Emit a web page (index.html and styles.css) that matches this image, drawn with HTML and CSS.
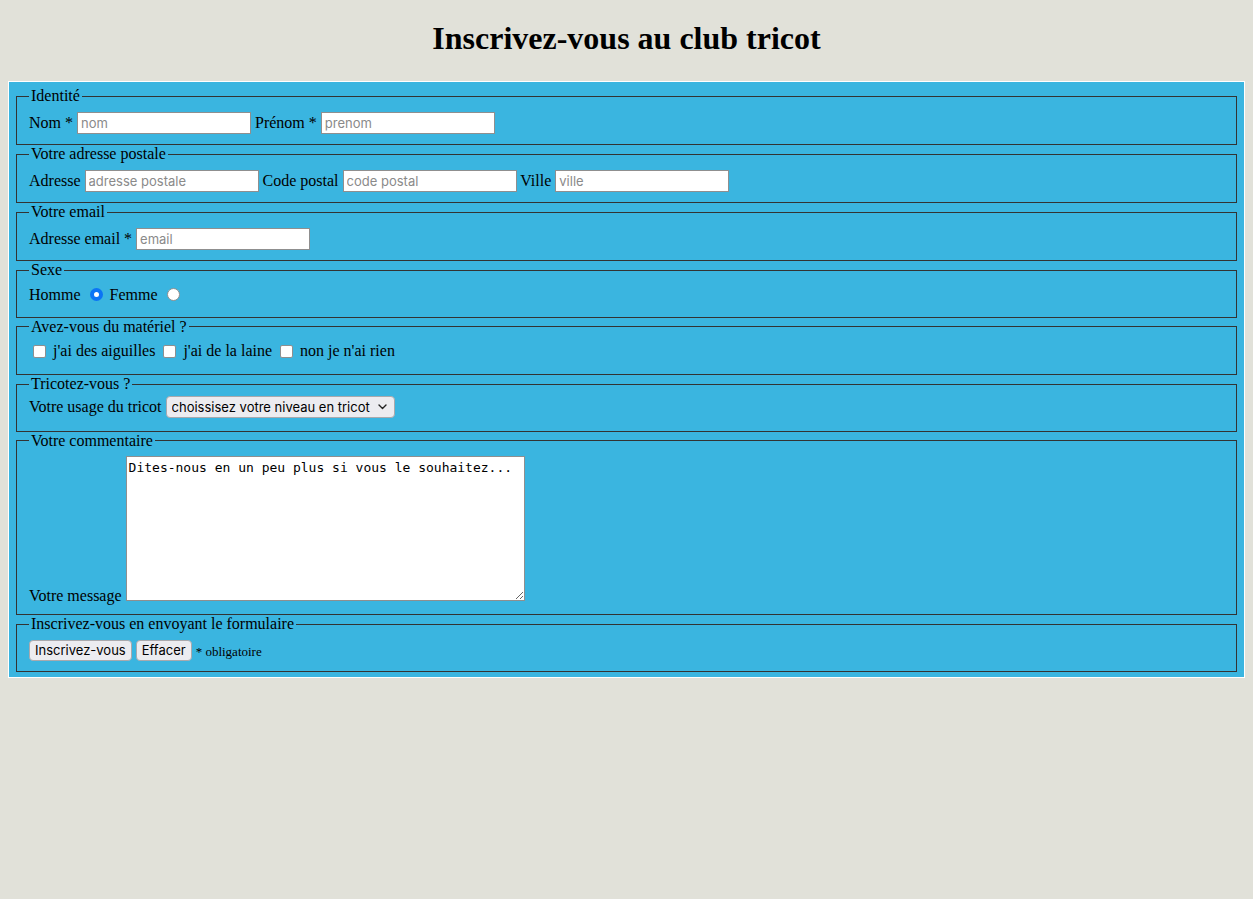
FILE: index.html
```html
<!DOCTYPE html>
<html lang="fr">
<head>
<meta charset="utf-8">
<title>Club tricot</title>
<link rel="stylesheet" href="styles.css">
</head>
<body>
<h1 class="title">Inscrivez-vous au club tricot</h1>
<form class="form">
  <fieldset class="group group-text">
    <legend>Identité</legend>
    <label>Nom *</label> <input class="field" type="text" placeholder="nom"> <label>Prénom *</label> <input class="field" type="text" placeholder="prenom">
  </fieldset>
  <fieldset class="group group-text">
    <legend>Votre adresse postale</legend>
    <label>Adresse</label> <input class="field" type="text" placeholder="adresse postale"> <label>Code postal</label> <input class="field" type="text" placeholder="code postal"> <label>Ville</label> <input class="field" type="text" placeholder="ville">
  </fieldset>
  <fieldset class="group group-text">
    <legend>Votre email</legend>
    <label>Adresse email *</label> <input class="field" type="email" placeholder="email">
  </fieldset>
  <fieldset class="group group-radio">
    <legend>Sexe</legend>
    <label>Homme</label> <input class="radio" type="radio" name="sexe" checked> <label>Femme</label> <input class="radio" type="radio" name="sexe">
  </fieldset>
  <fieldset class="group group-check">
    <legend>Avez-vous du matériel ?</legend>
    <input class="check" type="checkbox"> <label>j'ai des aiguilles</label> <input class="check" type="checkbox"> <label>j'ai de la laine</label> <input class="check" type="checkbox"> <label>non je n'ai rien</label>
  </fieldset>
  <fieldset class="group group-select">
    <legend>Tricotez-vous ?</legend>
    <label>Votre usage du tricot</label> <span class="select-wrap"><select class="select"><option>choissisez votre niveau en tricot</option></select><svg class="chev" width="9" height="6" viewBox="0 0 9 6"><path d="M1 1l3.5 3.5L8 1" fill="none" stroke="#222" stroke-width="1.4" stroke-linecap="round" stroke-linejoin="round"/></svg></span>
  </fieldset>
  <fieldset class="group group-area">
    <legend>Votre commentaire</legend>
    <label>Votre message</label> <textarea class="message">Dites-nous en un peu plus si vous le souhaitez...</textarea>
  </fieldset>
  <fieldset class="group group-actions">
    <legend>Inscrivez-vous en envoyant le formulaire</legend>
    <button class="btn" type="button">Inscrivez-vous</button> <button class="btn" type="button">Effacer</button> <small class="note">* obligatoire</small>
  </fieldset>
</form>
</body>
</html>
```
FILE: styles.css
```css
html {
  background: #e1e1d9;
}
body {
  margin: 0 8px;
  font-family: "Liberation Serif", "Times New Roman", serif;
  font-size: 16px;
  color: #000;
}
.title {
  margin: 20px 0 24px;
  font-size: 32px;
  line-height: 37px;
  font-weight: bold;
  text-align: center;
}
.form {
  background: #3ab5e0;
  border: 1px solid #ffffff;
  padding: 5px;
  margin: 0;
}
.group {
  margin: 0 2px;
  padding: 5.6px 12px 10px;
  border: 1px solid #333333;
  min-width: 0;
}
.group legend {
  padding: 0 2px;
  line-height: 18px;
}
.group-text {
  padding-top: 7px;
  padding-bottom: 10px;
}
.group-radio {
  padding-bottom: 13px;
}
.group-check {
  padding-top: 6.6px;
  padding-bottom: 14px;
}
.group-select {
  padding-top: 2.6px;
  padding-bottom: 13px;
}
.group-area {
  padding-bottom: 9px;
}
.group-actions {
  padding-top: 6.6px;
  padding-bottom: 10px;
}
.field {
  box-sizing: border-box;
  width: 174px;
  height: 22px;
  margin: 0;
  padding: 1px 3px;
  border: 1px solid #8f8f8f;
  background: #ffffff;
  font-family: Inter, "Liberation Sans", Arial, sans-serif;
  font-size: 13px;
  color: #000;
}
.field::placeholder {
  color: #8a8a8a;
}
.radio {
  appearance: none;
  -webkit-appearance: none;
  box-sizing: border-box;
  width: 13px;
  height: 13px;
  margin: 3px 3px 0 5px;
  border: 1px solid #8f8f8f;
  border-radius: 50%;
  background: #ffffff;
  vertical-align: -1px;
}
.radio:checked {
  border: 4px solid #0b74f5;
  background: #ffffff;
}
.check {
  appearance: none;
  -webkit-appearance: none;
  box-sizing: border-box;
  width: 13px;
  height: 13px;
  margin: 3px 3px 0 4px;
  border: 1px solid #8f8f8f;
  border-radius: 2px;
  background: #ffffff;
  vertical-align: -2px;
}
.select-wrap {
  position: relative;
  display: inline-block;
}
.select {
  appearance: none;
  -webkit-appearance: none;
  box-sizing: border-box;
  width: 229px;
  height: 22px;
  margin: 0;
  padding: 0 20px 0 5px;
  border: 1px solid #a9a9ad;
  border-radius: 4px;
  background: #ececf0;
  font-family: Inter, "Liberation Sans", Arial, sans-serif;
  font-size: 13px;
  color: #000;
}
.chev {
  position: absolute;
  right: 8px;
  top: 8px;
  pointer-events: none;
}
.message {
  box-sizing: border-box;
  width: 399px;
  height: 145px;
  margin: 1px 0 0;
  padding: 3px 2px 2px;
  border: 1px solid #8f8f8f;
  background: #ffffff;
  font-family: "DejaVu Sans Mono", Menlo, monospace;
  font-size: 13px;
  line-height: 16px;
  color: #000;
  resize: both;
  vertical-align: baseline;
}
.btn {
  box-sizing: border-box;
  height: 21px;
  margin: 0;
  padding: 0 5px;
  border: 1px solid #a9a9ad;
  border-radius: 4px;
  background: #ececf0;
  font-family: Inter, "Liberation Sans", Arial, sans-serif;
  font-size: 13px;
  color: #000;
}
.note {
  font-size: 13px;
}
```
